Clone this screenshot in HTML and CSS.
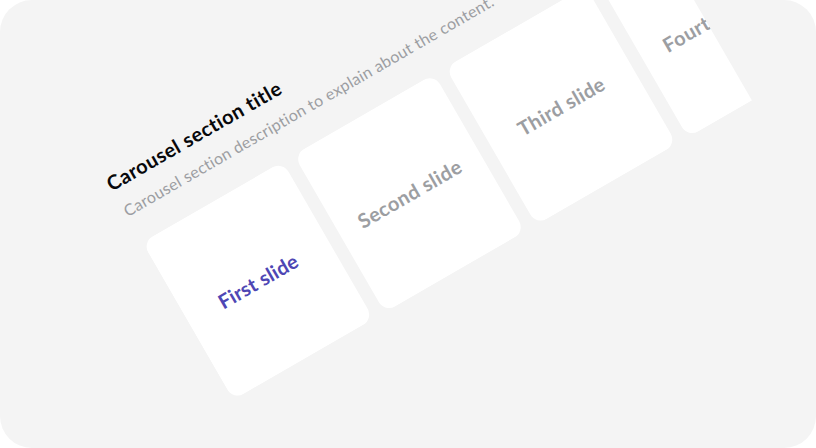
FILE: index.html
```html
<!DOCTYPE html>
<html lang="en">
<head>
<meta charset="utf-8">
<title>Carousel</title>
<link rel="stylesheet" href="styles.css">
</head>
<body>
<main class="stage">
  <section class="carousel">
    <h2 class="title">Carousel section title</h2>
    <p class="description">Carousel section description to explain about the content.</p>
    <div class="track">
      <article class="slide active"><span class="first">First slide</span></article>
      <article class="slide"><span class="second">Second slide</span></article>
      <article class="slide"><span class="third">Third slide</span></article>
      <article class="slide"><span class="fourth">Fourth slide</span></article>
    </div>
  </section>
</main>
</body>
</html>
```
FILE: styles.css
```css
* { box-sizing: border-box; }
body { margin: 0; background: #fff; font-family: Lato, "Liberation Sans", sans-serif; }
.stage {
  width: 816px;
  height: 448px;
  overflow: hidden;
  border-radius: 32px;
  background: #f4f4f4;
}
.carousel {
  width: 601px;
  padding: 200px 0 0 2px;
  transform: rotate(-30deg);
  transform-origin: 0 0;
}
.title {
  margin: 0 0 0 -1px;
  font-size: 20px;
  font-weight: 700;
  line-height: 28px;
  letter-spacing: 0.49px;
  white-space: nowrap;
  color: #08080a;
}
.description {
  margin: 6px 0 0;
  font-size: 16px;
  line-height: 24px;
  letter-spacing: 0.34px;
  white-space: nowrap;
  color: #9c9ea2;
}
.track {
  display: flex;
  gap: 13px;
  margin-top: 23px;
  overflow: hidden;
}
.slide {
  display: flex;
  flex: 0 0 162px;
  align-items: center;
  justify-content: center;
  height: 182px;
  border-radius: 12px;
  background: #fff;
  color: #9c9ea2;
  font-size: 20px;
  font-weight: 700;
  white-space: nowrap;
}
.active { color: #4e46b4; }
.first { letter-spacing: 0.25px; }
.second { letter-spacing: 0.45px; }
.third { letter-spacing: 0.4px; }
.fourth { letter-spacing: 0.6px; }
```
